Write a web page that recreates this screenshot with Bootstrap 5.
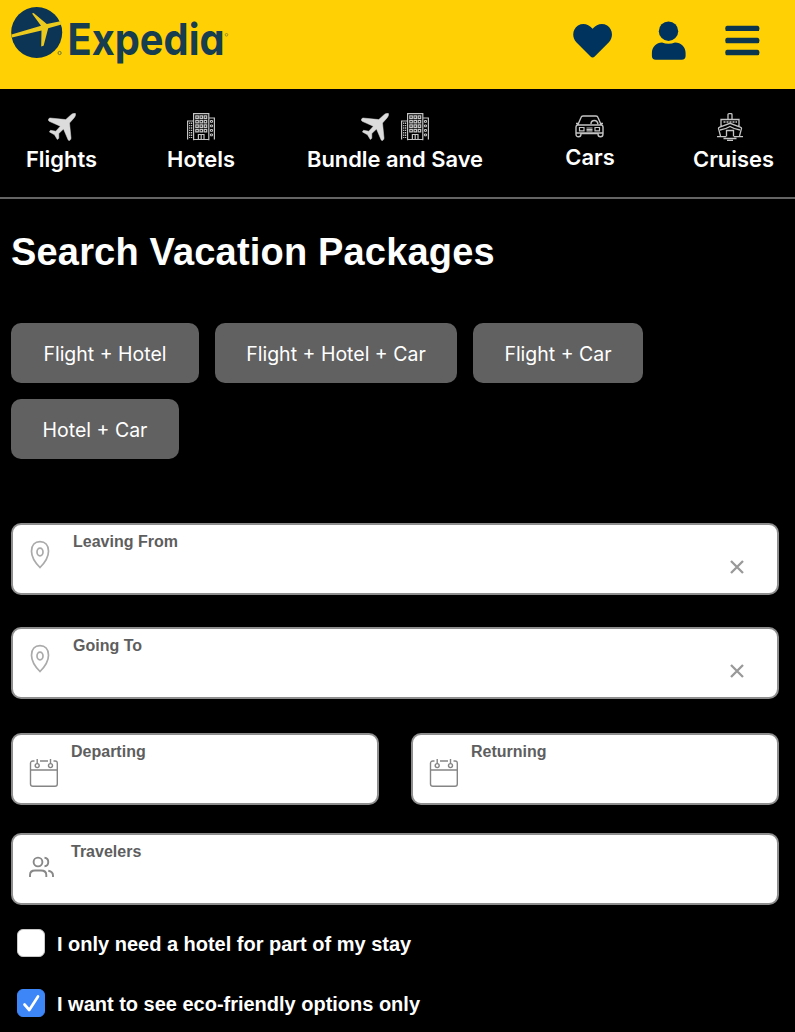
<!DOCTYPE html>
<html lang="en">
<head>
<meta charset="utf-8">
<meta name="viewport" content="width=device-width, initial-scale=1">
<title>Expedia – Vacation Packages</title>
<link href="https://cdn.jsdelivr.net/npm/bootstrap@5.3.0/dist/css/bootstrap.min.css" rel="stylesheet">
<style>
body{background:#000;color:#fff;font-family:"Liberation Sans",Arial,sans-serif;overflow:hidden}
svg{display:block;flex:none}
.topbar{height:89px;background:#ffd003;color:#00345f;padding:0 35px 0 0}
.brand-word{font:700 44px Inter,sans-serif;font-feature-settings:"cv11";fill:#173d50}
.topbar-actions{padding-top:21px}
.tabs{height:110px;border-bottom:2px solid #646464;display:grid;grid-template-columns:123px 156px 232px 158px 129px;padding-top:24px;font:600 21.900px/26px Inter,sans-serif}
.tabs a{color:#fff;text-decoration:none;white-space:nowrap}
.tab-label{margin-top:5px}
.pair{gap:12px}
.content{padding:0 16px 0 11px}
h1{font-size:38px;line-height:46px;font-weight:700;margin:30px 0 48px;letter-spacing:.18px;white-space:nowrap}
.kind{height:60px;border-radius:10px;background:#616161;color:#fff;border:0;font:400 19.500px/24px Inter,sans-serif;padding:2px 0 0}
.kind:hover{background:#6d6d6d;color:#fff}
.kind-a{width:188px}.kind-b{width:242px}.kind-c{width:170px}.kind-d{width:168px}
.field{height:72px;width:100%;background:#fff;border:2px solid #8e8e8e;border-radius:10px;color:#5e5e5e;font-size:16px;line-height:18px;font-weight:700;padding:8px 32px 0 16px}
.trip{margin-top:64px}
.field-pin{margin:7px 23px 0 1px}
.field-clear{margin-top:26px}
.field-going{margin-top:32px}
.dates{gap:32px;margin-top:34px}
.field-cal{margin:15px 12px 0 0}
.field-people{margin:12px 17px 0 -1px}
.travelers{margin-top:28px}
.check-row{font-size:20px;line-height:24px;font-weight:700;height:28px;padding-left:6px;gap:12px;margin-bottom:32px}
.check-row label{padding-top:2px;letter-spacing:-.01px}
.checks{margin-top:24px}
.check-row .form-check-input{width:28px;height:28px;margin:0;border:1px solid #c9c9c9;border-radius:6px;background-color:#fff}
.check-row .form-check-input:checked{background-color:#3c86f8;border-color:#3c86f8;background-image:url("data:image/svg+xml,%3Csvg xmlns='http://www.w3.org/2000/svg' viewBox='0 0 26 26'%3E%3Cpath d='M6.5 14.5l4.8 5.5L20 6.5' fill='none' stroke='white' stroke-width='2.7' stroke-linecap='round' stroke-linejoin='round'/%3E%3C/svg%3E")}
</style>
</head>
<body>
<svg width="0" height="0" class="position-absolute" aria-hidden="true">
<defs>
<symbol id="plane" viewBox="0 0 28 28"><path fill="#dcdcdc" d="M27.400.5C26.400-.2 24 .7 22.500 2.200L17.800 6.600 2 5Q.8 5.200.2 6.900L1.200 8.300 12.300 13.200 7.800 18.200 2.500 17.300 1.400 18.900 6.500 21.800 9.300 26.500 10.800 25.300 10.800 20.500 15.500 16 20.300 27.200 21.700 27.500Q23.200 26.300 23 25L21.500 10 25.800 5.200C27.200 3.700 28 1.400 27.400.5Z" stroke="#dcdcdc" stroke-width=".5" stroke-linejoin="round"/></symbol>
<symbol id="hotel" viewBox="0 0 28 28"><g fill="none" stroke="#c4c4c4" stroke-width="1.200"><path d="M6.600 27.300V.7H21.800V27.300M.6 26.500V8H6.600M21.800 5H27.400V26.500M6.600 26.500H21.800M11.400 27V21.500H17V27M14.200 21.500V27"/><path d="M8.800 2.800h2.500v2.500H8.800zM13 2.800h2.500v2.500H13zM17.200 2.800h2.500v2.500h-2.500zM8.800 7.300h2.500v2.500H8.800zM13 7.300h2.500v2.500H13zM17.200 7.300h2.500v2.500h-2.500zM8.800 11.800h2.500v2.500H8.800zM13 11.800h2.500v2.500H13zM17.200 11.800h2.500v2.500h-2.500zM8.800 16.300h2.500v2.500H8.800zM13 16.300h2.500v2.500H13zM17.200 16.300h2.500v2.500h-2.500z"/><path d="M2.700 9.500V25M4.600 9.500V25" stroke-dasharray="1.400 1"/><path d="M23.500 7.500h2v1.800h-2zM23.500 12h2v1.800h-2zM23.500 16.500h2v1.800h-2zM23.500 21h2v1.800h-2z" stroke-width="1"/></g></symbol>
<symbol id="pin" viewBox="0 0 20 30"><g fill="none" stroke="#aaa" stroke-width="1.700"><path d="M10 27.500C6.500 24 1.500 17.300 1.500 11.200 1.500 5 5 1.700 10 1.700S18.500 5 18.500 11.200C18.500 17.300 13.500 24 10 27.500Z"/><ellipse cx="10" cy="12" rx="3" ry="3.800"/></g></symbol>
<symbol id="cross" viewBox="0 0 16 16"><path d="M2 2l12 12M14 2L2 14" stroke="#999" stroke-width="2.300" fill="none"/></symbol>
<symbol id="calendar" viewBox="0 0 30 30"><g fill="none" stroke="#858585" stroke-width="1.400"><path d="M5.500 3H4Q1.500 3 1.500 5.500V26Q1.500 28.300 4 28.300H26Q28.300 28.300 28.300 26V5.500Q28.300 3 26 3H24.500M11 3H19M1.500 12H28.300"/><path d="M8.200 1V5.700M21.500 1V5.700"/><circle cx="8.200" cy="7.600" r="2"/><circle cx="21.500" cy="7.600" r="2"/></g></symbol>
</defs></svg>

<header class="topbar d-flex justify-content-between align-items-start">
  <svg width="260" height="88" viewBox="0 0 260 88" role="img" aria-label="Expedia">
    <circle cx="36.700" cy="32.500" r="25.500" fill="#0b3455"/>
    <path fill="#ecc91d" d="M11.500 34.500L41 25.800 32 13.600 33.600 13 46.800 23.900 61.500 20.900V24.500L48.200 28.300 43.600 45.800 41.200 46.500 41.500 30.500 12 37.500Z"/>
    <circle cx="59.600" cy="53" r="1.600" fill="none" stroke="#6f7a35" stroke-width="1"/>
    <text class="brand-word" transform="translate(67.500 55.300) scale(.905 1)">Expedia</text>
    <circle cx="226.500" cy="34.800" r="1.300" fill="none" stroke="#8b8a2a" stroke-width=".9"/>
  </svg>
  <div class="topbar-actions">
    <svg width="188" height="42" viewBox="572 21 188 42" fill="#00345f">
      <path d="M592.600 57.500Q591.500 57.500 590.500 56.500L576.300 42.300C571.500 37 572.500 29 578 25.500 583 22.600 588.500 24 592.600 28.800 596.700 24 602.200 22.600 607.200 25.500 612.700 29 613.700 37 608.900 42.300L594.700 56.500Q593.700 57.500 592.600 57.500Z"/>
      <circle cx="668.500" cy="31.200" r="9.700"/>
      <path d="M662 42.500Q668.500 44.900 675 42.500C681 42.500 685.600 47 685.600 53V56Q685.600 59.700 681.500 59.700H655.800Q651.900 59.700 651.900 56V53C651.900 47 656.500 42.500 662 42.500Z"/>
      <path d="M727 25.700h30.500q2 0 2 2.700t-2 2.700H727q-1.800 0-1.800-2.700t1.800-2.700zM727 37.800h30.500q2 0 2 2.700t-2 2.700H727q-1.800 0-1.800-2.700t1.800-2.700zM727 49.800h30.500q2 0 2 2.700t-2 2.700H727q-1.800 0-1.800-2.700t1.800-2.700z" fill="#0c354f"/>
    </svg>
  </div>
</header>

<nav class="tabs">
  <a href="#" class="d-flex flex-column align-items-center"><svg width="28" height="28"><use href="#plane"/></svg><span class="tab-label">Flights</span></a>
  <a href="#" class="d-flex flex-column align-items-center"><svg width="28" height="28"><use href="#hotel"/></svg><span class="tab-label">Hotels</span></a>
  <a href="#" class="d-flex flex-column align-items-center"><span class="d-flex pair"><svg width="28" height="28"><use href="#plane"/></svg><svg width="28" height="28"><use href="#hotel"/></svg></span><span class="tab-label">Bundle and Save</span></a>
  <a href="#" class="d-flex flex-column align-items-center"><svg width="30" height="26" viewBox="0.500 1 30 26"><g fill="none" stroke="#c4c4c4" stroke-width="1.400"><path d="M3.500 12.500L6.500 5.500Q7 4 8.500 4H21.500Q23 4 23.500 5.500L26.500 12.500M3.500 11.500H1.500M26.500 11.500H28.500M3 13H27Q28.500 13.500 28.500 15V22Q28.500 24.800 26 24.800T23.500 22V21.500H6.500V22Q6.500 24.800 4 24.800T1.500 22V15Q1.500 13.500 3 13ZM1.500 21H28.500M16.500 12C16.500 10 18 8.500 20 8.500S23 9.500 23.500 12"/><path d="M5 15.500H9.500V18.800H5ZM20.500 15.500H25V18.800H20.500ZM12 16H18M12 17.500H18M12 18.800H18" stroke-width="1.200"/></g></svg><span class="tab-label">Cars</span></a>
  <a href="#" class="d-flex flex-column align-items-center"><svg width="28" height="28" viewBox="0 0 28 28" class="me-2"><g fill="none" stroke="#c4c4c4" stroke-width="1.300"><path d="M12 6.500V1.500Q12 .7 13 .7H15Q16 .7 16 1.500V6.500M5 14V6.500H23V14M4.500 23L2.500 15.500Q2.400 14.500 3.200 14.300L14 10.300 24.800 14.300Q25.600 14.500 25.500 15.500L23.500 23M1 23.600H10M18 23.600H27M7.500 25.500H20.500M11 27.300H17M10.500 23.500V17.500H17.500V23.500"/><path d="M7.500 9H21" stroke-dasharray="2 1"/><path d="M4 17Q9 16.500 14 13.500 19 16.500 24 17"/></g></svg><span class="tab-label">Cruises</span></a>
</nav>

<main class="content">
  <h1>Search Vacation Packages</h1>
  <div class="d-flex flex-wrap gap-3">
    <button class="btn kind kind-a">Flight + Hotel</button>
    <button class="btn kind kind-b">Flight + Hotel + Car</button>
    <button class="btn kind kind-c">Flight + Car</button>
    <button class="btn kind kind-d">Hotel + Car</button>
  </div>
  <form class="trip">
    <div class="field d-flex"><svg width="20" height="30" class="field-pin"><use href="#pin"/></svg><label class="flex-fill">Leaving From</label><svg width="16" height="16" class="field-clear"><use href="#cross"/></svg></div>
    <div class="field field-going d-flex"><svg width="20" height="30" class="field-pin"><use href="#pin"/></svg><label class="flex-fill">Going To</label><svg width="16" height="16" class="field-clear"><use href="#cross"/></svg></div>
    <div class="dates d-flex">
      <div class="field d-flex"><svg width="30" height="30" class="field-cal"><use href="#calendar"/></svg><label>Departing</label></div>
      <div class="field d-flex"><svg width="30" height="30" class="field-cal"><use href="#calendar"/></svg><label>Returning</label></div>
    </div>
    <div class="field travelers d-flex"><svg width="26" height="24" viewBox="0 0 26 24" class="field-people"><g fill="none" stroke="#888" stroke-width="1.900"><circle cx="10" cy="7" r="4.400"/><path d="M2 22V20Q2 15.500 7 15.500H13Q18.300 15.500 18.300 20V22M16.500 2.700C21.500 3 21.500 11 16.500 11.200M20.300 15.700Q25 16.500 25 20.500V22"/></g></svg><label>Travelers</label></div>
    <div class="checks">
      <div class="check-row d-flex align-items-center"><input class="form-check-input" type="checkbox" id="part"><label for="part">I only need a hotel for part of my stay</label></div>
      <div class="check-row d-flex align-items-center"><input class="form-check-input" type="checkbox" id="eco" checked><label for="eco">I want to see eco-friendly options only</label></div>
    </div>
  </form>
</main>
<script src="https://cdn.jsdelivr.net/npm/bootstrap@5.3.0/dist/js/bootstrap.bundle.min.js"></script>
</body>
</html>
